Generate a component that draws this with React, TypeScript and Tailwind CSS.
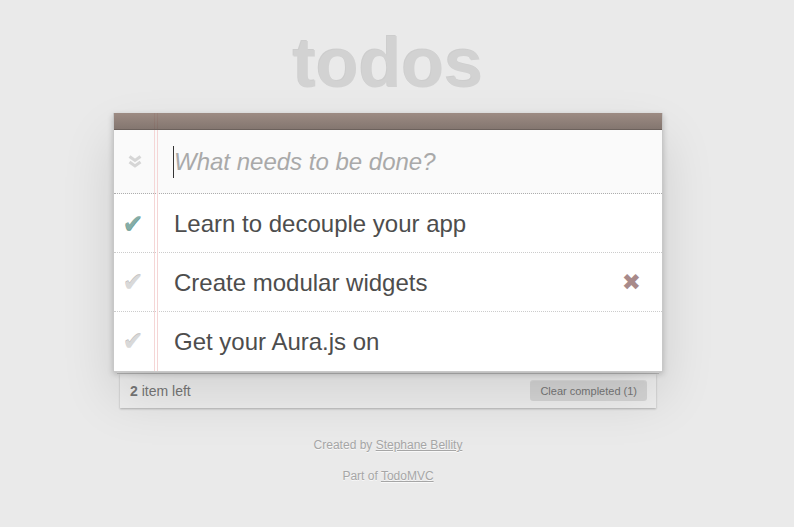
import React from "react";

const Check = ({ done }: { done: boolean }) => (
  <span
    className={
      "font-['DejaVu_Sans',sans-serif] text-[25px] leading-none " +
      (done
        ? "text-[#85ada7] [text-shadow:0_1px_0_#669991]"
        : "text-[#d9d9d9] [text-shadow:0_-1px_0_#bfbfbf]")
    }
  >
    ✔
  </span>
);

const items = [
  { text: "Learn to decouple your app", done: true, hover: false },
  { text: "Create modular widgets", done: false, hover: true },
  { text: "Get your Aura.js on", done: false, hover: false },
];

export default function App() {
  return (
    <div className="min-h-[527px] bg-[#eaeaea] font-['Liberation_Sans',Arial,sans-serif] text-[#4d4d4d]">
      <div className="ml-[113px] w-[550px] pt-[28px]">
        <h1 className="text-center text-[70px] font-bold leading-[70px] text-[#d2d2d2] [text-shadow:-1px_-1px_0_rgba(0,0,0,0.12)]">
          todos
        </h1>
        <div className="relative mt-[15px] border-x border-b border-[#c8c8c8] bg-white shadow-[0_2px_6px_0_rgba(0,0,0,0.2),0_25px_50px_0_rgba(0,0,0,0.12)]">
          <div className="absolute bottom-0 left-[40px] top-0 z-[1] w-[4px] border-x border-[#f5d6d6]" />
          <div className="relative z-[2] h-[17px] border-b border-[#6c615c] bg-[linear-gradient(to_bottom,rgba(132,110,100,0.8),rgba(101,84,76,0.8))]" />
          <div className="flex h-[64px] items-center border-b border-dotted border-[#adadad] bg-[rgba(0,0,0,0.02)]">
            <div className="flex w-[40px] justify-center pl-[1px]">
              <svg width="14" height="13" viewBox="0 0 14 13">
                <path d="M1.5 1.5 L7 5.5 L12.5 1.5" fill="none" stroke="#d6d6d6" strokeWidth="3" />
                <path d="M1.5 7 L7 11 L12.5 7" fill="none" stroke="#d6d6d6" strokeWidth="3" />
              </svg>
            </div>
            <div className="ml-[19px] flex items-center">
              <div className="h-[32px] w-[1px] bg-[#333]" />
              <span className="text-[24px] italic text-[#a9a9a9]">What needs to be done?</span>
            </div>
          </div>
          {items.map((it, i) => (
            <div
              key={i}
              className={
                "flex h-[59px] items-center " +
                (i < items.length - 1 ? "border-b border-dotted border-[#ccc]" : "")
              }
            >
              <div className="flex w-[40px] justify-center pr-[2px]">
                <Check done={it.done} />
              </div>
              <span className="ml-[20px] flex-1 text-[24px] leading-[29px] text-[#4d4d4d]">{it.text}</span>
              {it.hover && (
                <span className="mr-[21px] font-['DejaVu_Sans',sans-serif] text-[23px] leading-none text-[#a88a8a]">
                  ✖
                </span>
              )}
            </div>
          ))}
        </div>
        <div className="mx-[4px] h-[2px] border-b border-[#c4c4c4] bg-[#f7f7f7]" />
        <div className="mx-[7px] flex h-[34px] items-center justify-between bg-[#efefef] pl-[10px] pr-[9px] text-[14px] text-[#777] shadow-[0_1px_2px_rgba(0,0,0,0.25)]">
          <span>
            <b>2</b> item left
          </span>
          <span className="rounded-[3px] bg-[rgba(0,0,0,0.1)] px-[10px] text-[11px] leading-[20px] text-[#777] shadow-[0_-1px_0_0_rgba(0,0,0,0.08)]">
            Clear completed (1)
          </span>
        </div>
        <div className="text-center text-[12px] leading-[17px] text-[#a6a6a6] [text-shadow:0_1px_0_rgba(255,255,255,0.7)]">
          <p className="mt-[29px]">
            Created by <a className="underline">Stephane Bellity</a>
          </p>
          <p className="mt-[14px]">
            Part of <a className="underline">TodoMVC</a>
          </p>
        </div>
      </div>
    </div>
  );
}
